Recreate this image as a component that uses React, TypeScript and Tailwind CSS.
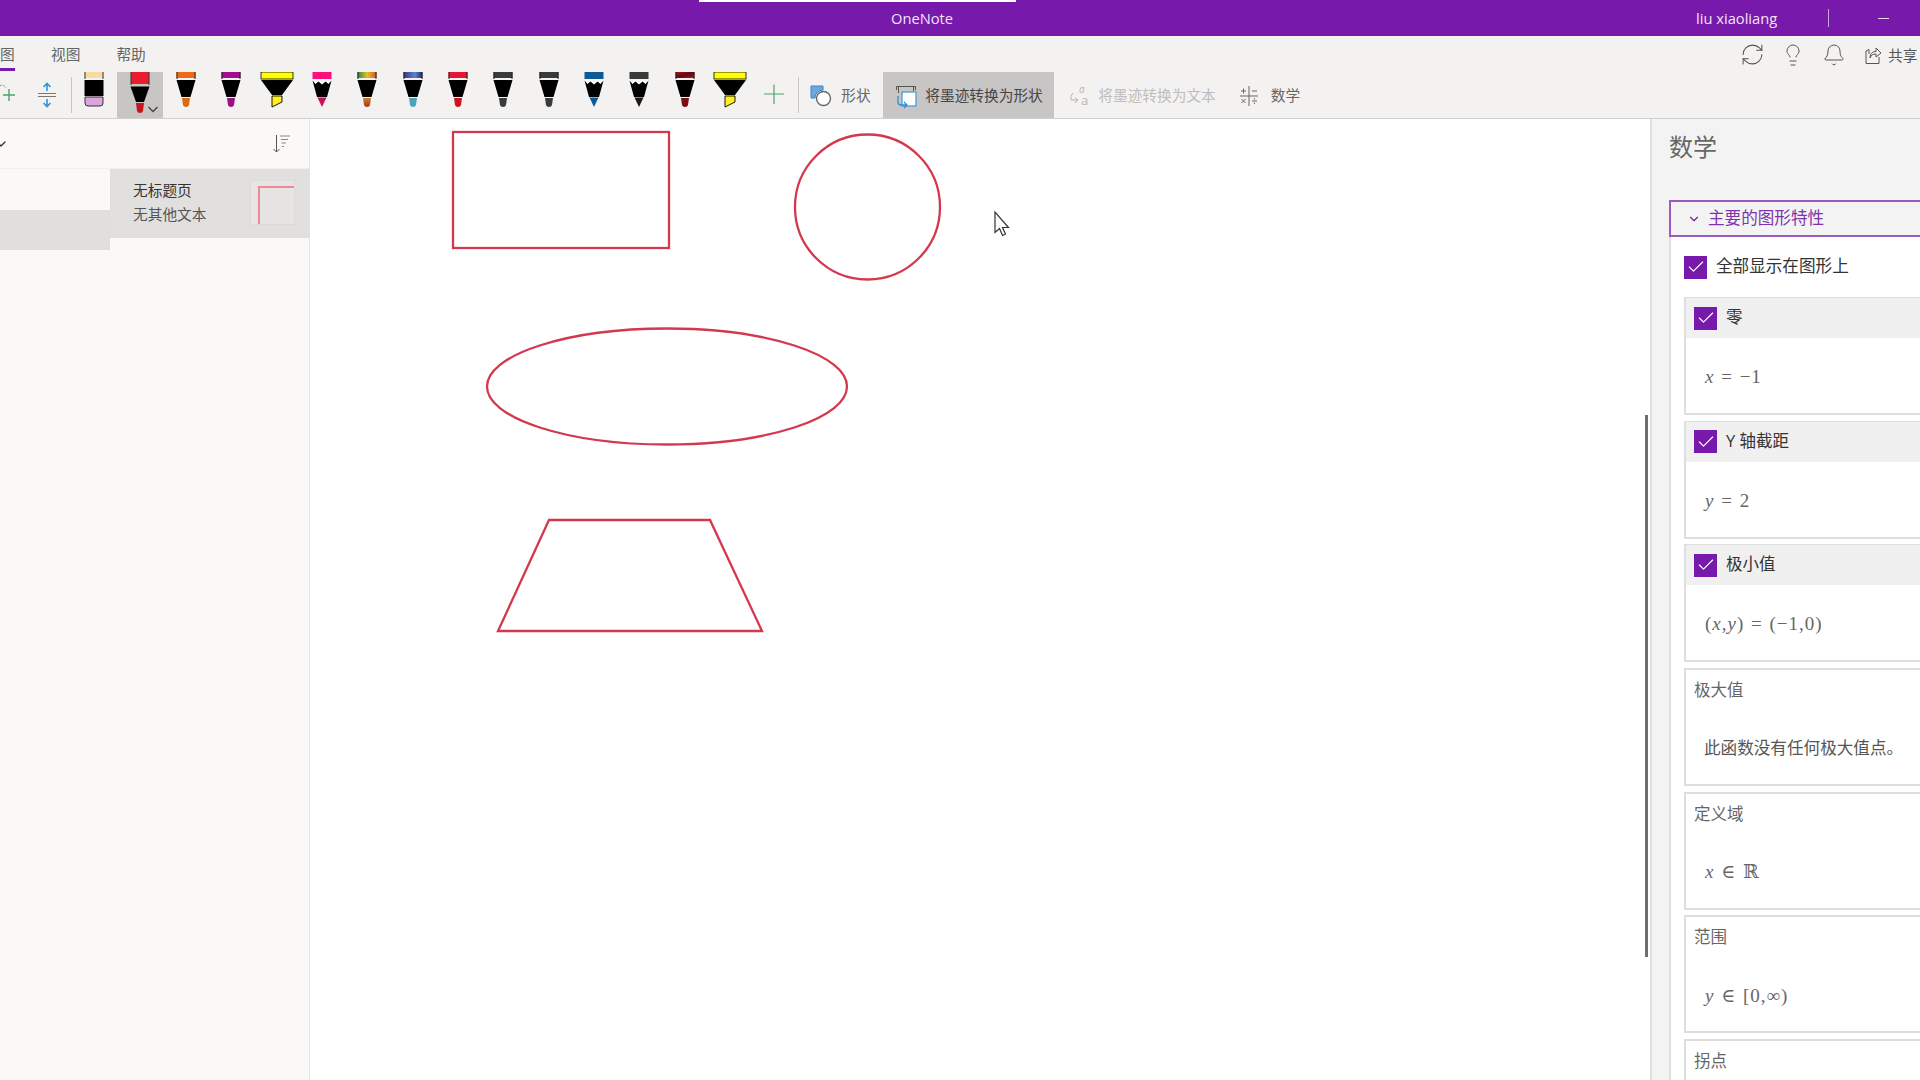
import React from "react";
import { Bell, Check, ChevronDown, Lightbulb, RefreshCw } from "lucide-react";

type PenProps = { band: string; tip: string; kind?: "pen" | "zig" | "hl" };

function Pen({ band, tip, kind = "pen" }: PenProps) {
  return (
    <div className="w-[45.33px] h-[46px] shrink-0">
      <svg width="46" height="46" viewBox="0 0 46 46">
        <defs>
          <linearGradient id="rainbow" x1="0" x2="1" y1="0" y2="0">
            <stop offset="0" stopColor="#1c8a4a" />
            <stop offset="0.5" stopColor="#e8c020" />
            <stop offset="1" stopColor="#d8502a" />
          </linearGradient>
          <linearGradient id="galaxy" x1="0" x2="1" y1="0" y2="0">
            <stop offset="0" stopColor="#3a2f8f" />
            <stop offset="0.6" stopColor="#5a86c8" />
            <stop offset="1" stopColor="#1f2a6a" />
          </linearGradient>
          <linearGradient id="lava" x1="0" x2="1" y1="0" y2="1">
            <stop offset="0" stopColor="#b3121c" />
            <stop offset="0.5" stopColor="#5a0a10" />
            <stop offset="1" stopColor="#c0141e" />
          </linearGradient>
          <linearGradient id="rainbowTip" x1="0" x2="0" y1="0" y2="1">
            <stop offset="0" stopColor="#d08030" />
            <stop offset="1" stopColor="#a83020" />
          </linearGradient>
        </defs>
        {kind === "hl" ? (
          <>
            <rect x="7" y="0" width="32" height="7" fill={band} stroke="#000" strokeWidth="0.8" />
            <path d="M7 8H39L28 23H18Z" fill="#000" />
            <path d="M18 24H28V30L18 35Z" fill={tip} stroke="#000" strokeWidth="0.9" />
          </>
        ) : kind === "zig" ? (
          <>
            <rect x="13.5" y="0" width="19" height="7" fill={band} />
            <path d="M13.5 7L16.5 10L19.5 7.5L23 10.5L26.5 7.5L29.5 10L32.5 7V8.5L29.5 12L26.5 9.5L23 12.5L19.5 9.5L16.5 12L13.5 8.5Z" fill="#fff" />
            <path d="M13.5 8.5L16.5 12L19.5 9.5L23 12.5L26.5 9.5L29.5 12L32.5 8.5L28 25H18Z" fill="#000" />
            <path d="M18.5 25.5H27.5L23 35Z" fill={tip} />
          </>
        ) : (
          <>
            <rect x="13.5" y="0" width="19" height="6" fill={band} />
            <rect x="13.5" y="0" width="1" height="7" fill="#222" />
            <rect x="31.5" y="0" width="1" height="7" fill="#222" />
            <path d="M13.5 8H32.5L27.5 25H18.5Z" fill="#000" />
            <path d="M19 26H27L26 33Q25.5 35 23 35Q20.5 35 20 33Z" fill={tip} />
          </>
        )}
      </svg>
    </div>
  );
}

function Box({ cls }: { cls: string }) {
  return (
    <div className={`${cls} bg-[#7719aa] flex items-center justify-center shrink-0`}>
      <Check className="w-[20px] h-[20px] text-white" strokeWidth={1.4} />
    </div>
  );
}

function Card({ title, checked, children }: { title: string; checked?: boolean; children: React.ReactNode }) {
  return (
    <div className="h-[118px] w-[300px] mb-[5.67px] border-2 border-[#dedede] bg-white shrink-0 flex flex-col">
      {checked ? (
        <div className="h-[40px] bg-[#f0f0f0] flex items-center pl-[8px] gap-[9px] text-[16.5px] text-[#333] leading-[22px] -mt-[1px] shrink-0">
          <Box cls="w-[23px] h-[23px]" />
          <span className="-mt-[2px]">{title}</span>
        </div>
      ) : (
        <div className="h-[40px] flex items-center pl-[8px] text-[16.5px] text-[#666] leading-[22px] shrink-0">{title}</div>
      )}
      <div className="flex-1 flex items-center pl-[19px] pt-[3px]">{children}</div>
    </div>
  );
}

function M({ children }: { children: React.ReactNode }) {
  return <span className="font-['Liberation_Serif','DejaVu_Serif',serif] text-[19px] text-[#666] tracking-[1px] [word-spacing:1px] leading-[24px] whitespace-nowrap">{children}</span>;
}

export default function App() {
  return (
    <div className="w-[1920px] h-[1080px] overflow-hidden flex flex-col bg-white font-['Open_Sans','Noto_Sans_CJK_SC',sans-serif]">
      {/* title bar */}
      <div className="relative h-[36px] bg-[#7719aa] flex items-center text-[#f0e4f6] text-[14.7px] leading-[20px] shrink-0">
        <div className="absolute left-[699px] top-0 w-[317px] h-[2px] bg-white" />
        <span className="ml-[891px] w-[805px]">OneNote</span>
        <span className="w-[132px]">liu xiaoliang</span>
        <div className="w-px h-[18px] bg-[#c9a3de]" />
        <div className="ml-[49px] w-[11px] h-px bg-[#e6d5ef]" />
      </div>

      {/* ribbon */}
      <div className="h-[83px] bg-[#f3f2f1] border-b border-[#d2d0ce] shrink-0 flex flex-col">
        <div className="h-[36px] flex items-start text-[14.7px] text-[#666] leading-[20px] shrink-0">
          <div className="w-[15px] h-[35px] pt-[8px] border-b-[3px] border-[#7719aa]">
            <span className="block">图</span>
          </div>
          <span className="ml-[36px] mt-[8px]">视图</span>
          <span className="ml-[36px] mt-[8px]">帮助</span>
          <div className="ml-auto flex items-center text-[#555] mt-[6px]">
            <RefreshCw className="w-[25px] h-[25px] mr-[16px]" strokeWidth={1} />
            <Lightbulb className="w-[24px] h-[24px] mr-[17px]" strokeWidth={1} />
            <Bell className="w-[24px] h-[24px] mr-[19px]" strokeWidth={1} />
            <svg width="17" height="20" viewBox="0 0 17 20" fill="none" stroke="#555" strokeWidth="1" className="mr-[6px]">
              <path d="M4 9V4.5L1 6V18.5H14V12" />
              <path d="M5 13C5 8 8 6.500 11 6.500V3L16 8L11 12V9C8 9 6 10 5 13Z" />
            </svg>
            <span className="w-[32px] whitespace-nowrap">共享</span>
          </div>
        </div>
        <div className="h-[46px] flex items-start text-[14.7px] text-[#666] leading-[20px]">
          {/* lasso plus */}
          <svg width="47" height="46" viewBox="0 0 47 46" className="shrink-0 -mr-[12px]">
            <path d="M0 13.500A5 5 0 0 1 6 16" stroke="#999" fill="none" strokeDasharray="2 1" />
            <path d="M9 17V29M3 23H15" stroke="#4aa564" strokeWidth="1.4" fill="none" />
          </svg>
          <svg width="24" height="46" viewBox="0 0 24 46" className="shrink-0">
            <path d="M3 21.500H21M3 24.500H21" stroke="#777" strokeWidth="1.2" />
            <path d="M12 19V12M8.500 15L12 11.500L15.500 15M12 27V35M8.500 31L12 34.500L15.500 31" stroke="#2f96d8" strokeWidth="1.6" fill="none" />
          </svg>
          <div className="ml-[12px] mt-[5px] w-px h-[36px] bg-[#c8c6c4] shrink-0" />
          <div className="w-[45px] h-[46px] shrink-0">
            <svg width="45" height="46" viewBox="0 0 45 46">
              <rect x="12.500" y="0" width="19" height="6" fill="#f6dca0" />
              <rect x="12.500" y="0" width="1" height="7" fill="#333" />
              <rect x="30.500" y="0" width="1" height="7" fill="#333" />
              <rect x="12.500" y="8" width="19" height="16" fill="#000" />
              <path d="M13 25H31V31Q31 34 28 34H16Q13 34 13 31Z" fill="#dca3dc" stroke="#333" strokeWidth="1" />
            </svg>
          </div>
          <div className="relative w-[46px] h-[46px] bg-[#c8c6c4] shrink-0">
            <svg width="46" height="46" viewBox="0 0 46 46">
              <rect x="14" y="0" width="18" height="12" fill="#ea1c2e" />
              <rect x="13.500" y="0" width="1" height="13" fill="#333" />
              <rect x="31.500" y="0" width="1" height="13" fill="#333" />
              <path d="M13.500 14.500H32.500L27 30H19Z" fill="#000" />
              <path d="M19 31H27L26 39Q25.500 41 23 41Q20.500 41 20 39Z" fill="#c8141f" />
              <path d="M31.500 35L36 39.500L40.500 35" stroke="#444" strokeWidth="1.300" fill="none" />
            </svg>
          </div>
          <Pen band="#ef6a12" tip="#d96a12" />
          <Pen band="#a0108c" tip="#9a1086" />
          <Pen band="#ffff00" tip="#ffee20" kind="hl" />
          <Pen band="#ff0f7b" tip="#c8105c" kind="zig" />
          <Pen band="url(#rainbow)" tip="url(#rainbowTip)" />
          <Pen band="url(#galaxy)" tip="#4aa5b8" />
          <Pen band="#ea1430" tip="#d0121f" />
          <Pen band="#3a3a3a" tip="#3a3a3a" />
          <Pen band="#3a3a3a" tip="#3a3a3a" />
          <Pen band="#0f5a96" tip="#0f5a96" kind="zig" />
          <Pen band="#3a3a3a" tip="#1a1a1a" kind="zig" />
          <Pen band="url(#lava)" tip="#7a0c14" />
          <Pen band="#ffff00" tip="#ffee20" kind="hl" />
          <svg width="20" height="46" viewBox="0 0 20 46" className="shrink-0 ml-[12px]">
            <path d="M10 12.500V32M0 22H20" stroke="#4aa564" strokeWidth="1.200" />
          </svg>
          <div className="w-px h-[36px] bg-[#c8c6c4] mt-[5px] ml-[14px] shrink-0" />
          <svg width="24" height="24" viewBox="0 0 24 24" className="shrink-0 ml-[10px] mt-[12px]">
            <path d="M2 2H14V6A8 8 0 0 0 6 14H2Z" fill="#6ea8dc" stroke="#3a86c8" strokeWidth="1" />
            <circle cx="14.500" cy="14.500" r="7" fill="#fff" stroke="#666" strokeWidth="1.400" />
          </svg>
          <span className="ml-[8px] mt-[13px] w-[30px] whitespace-nowrap">形状</span>
          <div className="ml-[12px] w-[171px] h-[46px] bg-[#c8c6c4] flex items-start shrink-0">
            <svg width="22" height="24" viewBox="0 0 22 24" className="ml-[12px] mt-[13px] shrink-0">
              <path d="M1.500 5V1.500H20.500V5M3.500 1.500V8M18.500 1.500V6" stroke="#555" fill="none" strokeWidth="1" />
              <rect x="7" y="7" width="14" height="14" fill="#fff" stroke="#4a9bd8" strokeWidth="1.300" />
              <path d="M3 11V17C3 19 4 20 6 20H12M9 17L12 20L9 23" stroke="#2f8fd0" fill="none" strokeWidth="1.300" />
            </svg>
            <span className="ml-[8px] mt-[13px] text-[#444] whitespace-nowrap">将墨迹转换为形状</span>
          </div>
          <svg width="22" height="24" viewBox="0 0 22 24" className="ml-[16px] mt-[12px] shrink-0">
            <text x="9" y="9" fontSize="10" fill="#b5b5b5" fontStyle="italic">a</text>
            <text x="11" y="21" fontSize="13" fill="#b5b5b5">a</text>
            <path d="M3 9Q0 12 1 16L8 16M5 14L8 16L5 19" stroke="#b5b5b5" fill="none" strokeWidth="1" />
          </svg>
          <span className="ml-[6px] mt-[13px] text-[#bdbdbd] whitespace-nowrap">将墨迹转换为文本</span>
          <svg width="20" height="22" viewBox="0 0 20 22" className="ml-[23px] mt-[13px] shrink-0">
            <path d="M10 1V21M1 11H19" stroke="#666" strokeWidth="1" />
            <path d="M2 6H7M4.500 3.500V8.500M13 6H18M2.500 14L6.500 18M6.500 14L2.500 18M13 16H18" stroke="#666" strokeWidth="1" />
            <circle cx="15.500" cy="13.800" r="0.700" fill="#666" />
            <circle cx="15.500" cy="18.200" r="0.700" fill="#666" />
          </svg>
          <span className="ml-[12px] mt-[13px] whitespace-nowrap">数学</span>
        </div>
      </div>

      {/* main */}
      <div className="flex-1 flex min-h-0">
        {/* left */}
        <div className="w-[310px] bg-[#faf9f8] border-r border-[#e3e2e0] flex flex-col shrink-0">
          <div className="h-[49px] flex items-center justify-between shrink-0">
            <ChevronDown className="w-[16px] h-[16px] -ml-[7px] text-[#333]" strokeWidth={2} />
            <svg width="18" height="20" viewBox="0 0 18 20" fill="none" className="mr-[18px]">
              <path d="M3.500 1V18M0.500 15L3.500 18L6.500 15" stroke="#555" strokeWidth="1" />
              <path d="M7 2H17M8 5.500H15M8.500 9H13M9 12.500H11" stroke="#888" strokeWidth="1" />
            </svg>
          </div>
          <div className="flex-1 flex border-t border-[#f0efed]">
            <div className="w-[110px] shrink-0 pt-[41px]">
              <div className="h-[40px] bg-[#e1dfdd]" />
            </div>
            <div className="flex-1">
              <div className="h-[69px] bg-[#e1e0df] flex items-start pl-[23px] pr-[14px] text-[14.7px] text-[#333] leading-[24px]">
                <div className="pt-[9px] flex-1 whitespace-nowrap">
                  <div>无标题页</div>
                  <div className="text-[#555]">无其他文本</div>
                </div>
                <div className="w-[45px] h-[45px] mt-[11px] bg-[#e6e5e4] border border-[#dcdbda] pl-[7px] pt-[5px]">
                  <div className="w-full h-full border-l-2 border-t-2 border-[#ec8997]" />
                </div>
              </div>
            </div>
          </div>
        </div>

        {/* canvas */}
        <div className="relative flex-1 bg-white overflow-hidden">
          <svg className="absolute inset-0" width="1340" height="961" viewBox="0 1 1340 961" fill="none" stroke="#d4384e" strokeWidth="2.3">
            <rect x="143" y="14" width="216" height="116" />
            <circle cx="557.500" cy="89" r="72.500" />
            <ellipse cx="357" cy="268.500" rx="180" ry="58" />
            <polygon points="239,402 400,402 452,513 188,513" />
            <path d="M685 94V114.500L689.500 110.500L692.500 117.500L695.500 116L692.500 109.500H698.500Z" fill="#fff" stroke="#333" strokeWidth="1.200" />
          </svg>
          <div className="absolute right-[2px] top-[296px] w-[3px] h-[542px] bg-[#6e6e6e]" />
        </div>

        {/* math */}
        <div className="w-[270px] shrink-0 bg-[#f3f3f3] border-l-2 border-[#dfdfdf] overflow-hidden pl-[17px]">
          <div className="h-[81px] pt-[11px] text-[24px] leading-[34px] text-[#666]">数学</div>
          <div className="w-[300px] h-[37px] border-2 border-[#9b59c2] flex items-center pl-[16px] text-[16.6px] text-[#8033ab] leading-[22px] -mr-[40px]">
            <ChevronDown className="w-[14px] h-[14px] text-[#7719aa] mr-[7px]" strokeWidth={2} />
            <span className="-mt-[1px]">主要的图形特性</span>
          </div>
          <div className="w-[300px] bg-white border-l-2 border-[#dfdfdf] h-[900px] pl-[13px]">
            <div className="h-[60px] flex items-center gap-[9px] text-[16.6px] text-[#333] leading-[22px]">
              <Box cls="w-[23px] h-[23px]" />
              <span className="-mt-[2px]">全部显示在图形上</span>
            </div>
            <Card title="零" checked><M><i>x</i> = −1</M></Card>
            <Card title="Y 轴截距" checked><M><i>y</i> = 2</M></Card>
            <Card title="极小值" checked><M>(<i>x</i>,<i>y</i>) = (−1,0)</M></Card>
            <Card title="极大值"><span className="text-[16.6px] text-[#555] leading-[22px] whitespace-nowrap -ml-[1px]">此函数没有任何极大值点。</span></Card>
            <Card title="定义域"><M><i>x</i> ∈ ℝ</M></Card>
            <Card title="范围"><M><i>y</i> ∈ [0,∞)</M></Card>
            <div className="h-[60px] w-[300px] border-2 border-b-0 border-[#dedede] bg-white pl-[8px] pt-[9px] text-[16.5px] text-[#666] leading-[22px]">拐点</div>
          </div>
        </div>
      </div>
    </div>
  );
}
